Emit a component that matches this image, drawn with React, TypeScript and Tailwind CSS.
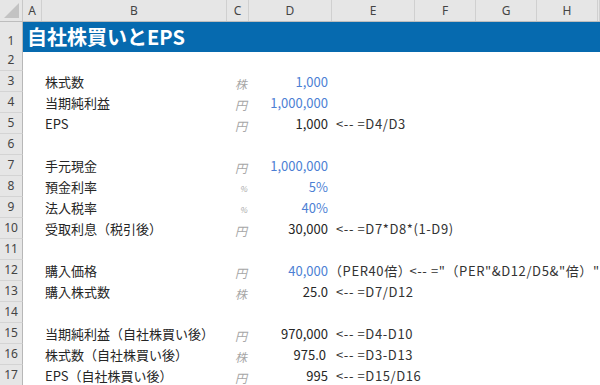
import type { ReactNode } from "react";

const GRID = "grid grid-cols-[23px_19px_185px_22px_83px_83px_61px_61px_61px_1fr]";

type Row = {
  n: number;
  label?: string;
  unit?: string;
  value?: string;
  blue?: boolean;
  note?: ReactNode;
  valuePad?: string;
};

const ROWS: Row[] = [
  { n: 2 },
  { n: 3, label: "株式数", unit: "株", value: "1,000", blue: true },
  { n: 4, label: "当期純利益", unit: "円", value: "1,000,000", blue: true },
  { n: 5, label: "EPS", unit: "円", value: "1,000", note: "<-- =D4/D3" },
  { n: 6 },
  { n: 7, label: "手元現金", unit: "円", value: "1,000,000", blue: true },
  { n: 8, label: "預金利率", unit: "%", value: "5%", blue: true },
  { n: 9, label: "法人税率", unit: "%", value: "40%", blue: true },
  { n: 10, label: "受取利息（税引後）", unit: "円", value: "30,000", note: "<-- =D7*D8*(1-D9)" },
  { n: 11 },
  {
    n: 12,
    label: "購入価格",
    unit: "円",
    value: "40,000",
    blue: true,
    note: (
      <>
        <span className="-ml-[7px]">（PER40倍）</span>
        <span className="-ml-[2px]">{"<-- =\"（PER\"&D12/D5&\"倍）\""}</span>
      </>
    ),
  },
  { n: 13, label: "購入株式数", unit: "株", value: "25.0", note: "<-- =D7/D12" },
  { n: 14 },
  { n: 15, label: "当期純利益（自社株買い後）", unit: "円", value: "970,000", note: "<-- =D4-D10" },
  { n: 16, label: "株式数（自社株買い後）", unit: "株", value: "975.0", note: "<-- =D3-D13", valuePad: "pr-[6px]" },
  { n: 17, label: "EPS（自社株買い後）", unit: "円", value: "995", note: "<-- =D15/D16" },
];

const HEADERS = ["A", "B", "C", "D", "E", "F", "G", "H", ""];

function RowHead({ n }: { n: number }) {
  return (
    <div className="flex items-end justify-center border-r border-b border-r-[#b7b7b7] border-b-[#d4d4d4] bg-[#e6e6e6] pb-[2px] font-['Noto_Sans',sans-serif] text-[12px] leading-[16px] text-[#444]">
      {n}
    </div>
  );
}

function SheetRow({ row }: { row: Row }) {
  return (
    <div className={`${GRID} h-[21px]`}>
      <RowHead n={row.n} />
      <div />
      <div className="flex items-center whitespace-nowrap pl-[3px] text-[13px] text-[#262626]">{row.label}</div>
      <div className="flex items-end justify-end pr-[2px] pb-[2px] italic text-[#a6a6a6]">
        {row.unit === "%" ? (
          <span className="mb-[2px] text-[8px] leading-none">%</span>
        ) : (
          <span className="text-[12px] leading-none">{row.unit}</span>
        )}
      </div>
      <div
        className={`flex items-center justify-end ${row.valuePad ?? "pr-[4px]"} text-[13px] ${
          row.blue ? "text-[#4d7fd4]" : "text-[#262626]"
        }`}
      >
        {row.value}
      </div>
      <div className="col-span-5 flex items-center whitespace-nowrap pl-[4px] text-[13px] tracking-[0.6px] text-[#333]">
        {row.note}
      </div>
    </div>
  );
}

export default function App() {
  return (
    <div className="h-[385px] w-[600px] overflow-hidden bg-white font-['Noto_Sans_CJK_JP',sans-serif]">
      <div className={`${GRID} h-[22px] border-b border-[#bdbdbd] bg-[#e6e6e6]`}>
        <div className="relative border-r border-[#c8c8c8]">
          <svg className="absolute right-[3px] bottom-[3px]" width="15" height="15" viewBox="0 0 15 15">
            <polygon points="15,0 15,15 0,15" fill="#c3c3c3" />
          </svg>
        </div>
        {HEADERS.map((letter, i) => (
          <div
            key={i}
            className="flex items-center justify-center border-r border-[#d0d0d0] pt-[1px] font-['Noto_Sans',sans-serif] text-[12px] text-[#444]"
          >
            {letter}
          </div>
        ))}
      </div>

      <div className={`${GRID} h-[28px]`}>
        <RowHead n={1} />
        <div className="col-span-9 flex items-center bg-[#066aaf] pl-[4px] text-[20px] font-bold text-white">
          自社株買いとEPS
        </div>
      </div>

      {ROWS.map((row) => (
        <SheetRow key={row.n} row={row} />
      ))}
    </div>
  );
}
